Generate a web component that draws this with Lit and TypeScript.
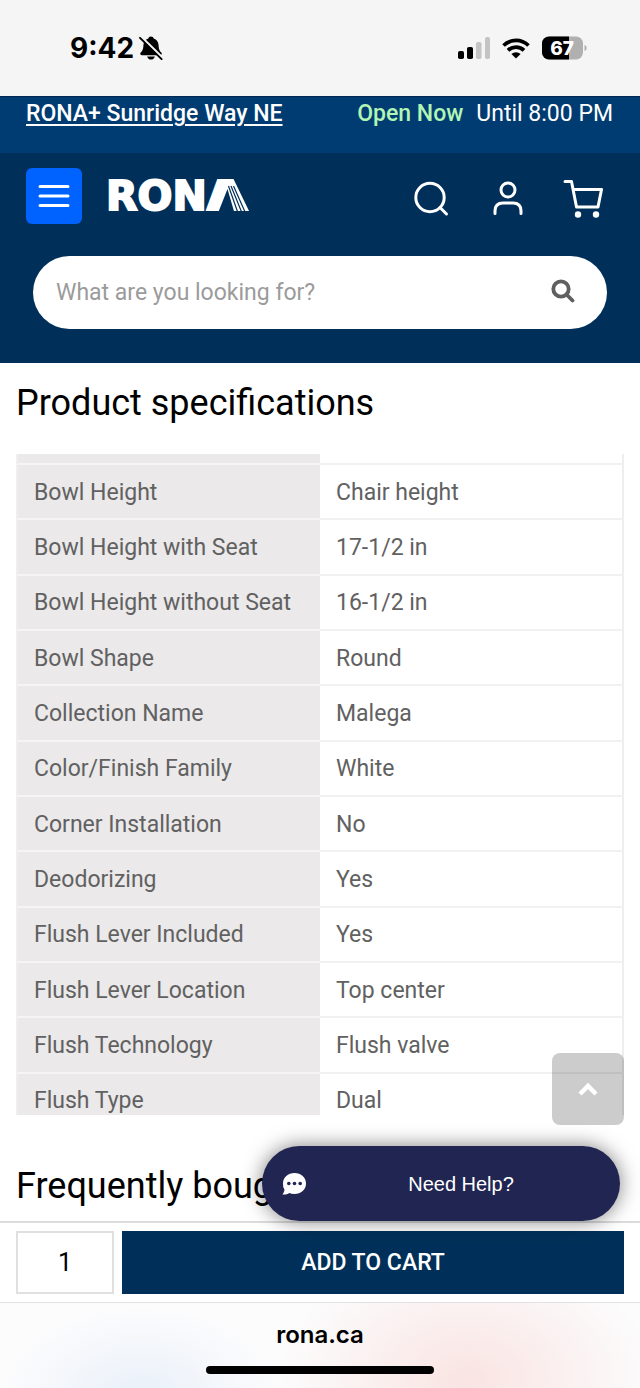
import { LitElement, html, css } from "lit";
import { customElement, state } from "lit/decorators.js";

const SPECS: [string, string][] = [
  ["Bowl Height", "Chair height"],
  ["Bowl Height with Seat", "17-1/2 in"],
  ["Bowl Height without Seat", "16-1/2 in"],
  ["Bowl Shape", "Round"],
  ["Collection Name", "Malega"],
  ["Color/Finish Family", "White"],
  ["Corner Installation", "No"],
  ["Deodorizing", "Yes"],
  ["Flush Lever Included", "Yes"],
  ["Flush Lever Location", "Top center"],
  ["Flush Technology", "Flush valve"],
  ["Flush Type", "Dual"],
];

@customElement("status-bar")
class StatusBar extends LitElement {
  static styles = css`
    :host {
      display: flex;
      justify-content: space-between;
      align-items: center;
      height: 96px;
      padding: 0 53px 0 70px;
      box-sizing: border-box;
      background: #f5f5f5;
      color: #000;
      font-family: Inter, sans-serif;
    }
    .side {
      display: flex;
      align-items: center;
    }
    .left {
      gap: 5px;
    }
    .right {
      gap: 12px;
    }
    .time {
      font-size: 28px;
      line-height: 32px;
      font-weight: 700;
    }
    svg {
      display: block;
    }
    .level {
      font: 800 19px Inter, sans-serif;
      fill: #fff;
    }
  `;

  render() {
    return html`
      <div class="side left">
        <span class="time">9:42</span>
        <svg width="24" height="24" viewBox="0 0 24 24" aria-hidden="true">
          <path d="M12 .5c1.500 0 2.400.8 2.700 1.900 3 1 4.700 3.600 4.900 7 .2 4.200 1.200 5.600 2.700 7.200.9 1 .5 2.600-1 2.600H2.700c-1.500 0-1.900-1.600-1-2.600 1.500-1.600 2.500-3 2.700-7.200.2-3.400 1.900-6 4.900-7C9.600 1.300 10.500.5 12 .5z" />
          <path d="M8.200 20.500h7.600c-.4 1.900-1.900 3.100-3.800 3.100s-3.400-1.200-3.800-3.100z" />
          <path d="M2.200.8 24 22.200" stroke="#f5f5f5" stroke-width="2.400" />
          <path d="M1 1.800 22.600 23.200" stroke="#000" stroke-width="1.900" stroke-linecap="round" />
        </svg>
      </div>
      <div class="side right">
        <svg width="32" height="22" viewBox="0 0 32 22" aria-hidden="true">
          <rect x="0" y="14" width="6" height="8" rx="1.800" />
          <rect x="9" y="10" width="6" height="12" rx="1.800" />
          <rect x="18" y="5" width="5.500" height="17" rx="1.800" fill="#c4c4c4" />
          <rect x="27" y="0" width="5" height="22" rx="1.800" fill="#c4c4c4" />
        </svg>
        <svg width="28" height="21" viewBox="0 0 28 21" aria-hidden="true">
          <g fill="none" stroke="#000" stroke-width="3.700">
            <path d="M1.500 7.500a18 18 0 0 1 25 0" />
            <path d="M6 12.300a11.500 11.500 0 0 1 16 0" />
          </g>
          <path d="M14 20.500 9.400 16a6.600 6.600 0 0 1 9.200 0z" />
        </svg>
        <svg width="45" height="24" viewBox="0 0 45 24" role="img" aria-label="Battery 67">
          <defs><clipPath id="b"><rect width="41" height="23" y=".5" rx="7" /></clipPath></defs>
          <g clip-path="url(#b)">
            <rect width="45" height="24" fill="#b0b0b0" />
            <rect width="27" height="24" />
          </g>
          <path d="M42.500 9v6c1.500-.5 2.200-1.600 2.200-3s-.7-2.500-2.200-3z" fill="#b0b0b0" />
          <text class="level" x="20" y="19" text-anchor="middle">67</text>
        </svg>
      </div>
    `;
  }
}

@customElement("site-header")
class SiteHeader extends LitElement {
  static styles = css`
    :host {
      display: block;
      color: #fff;
      font-family: Roboto, sans-serif;
    }
    .store {
      display: flex;
      justify-content: space-between;
      height: 57px;
      padding: 1px 27px 0 26px;
      background: #003b71;
      border-top: 1px solid #002850;
      box-sizing: border-box;
      font-size: 23px;
      line-height: 32px;
    }
    a {
      color: #fff;
      font-weight: 500;
      text-decoration-thickness: 2px;
      text-underline-offset: 3px;
    }
    .hours {
      display: flex;
      gap: 13px;
    }
    .open {
      color: #b2f5b4;
      font-weight: 500;
    }
    .nav {
      background: #003059;
      padding: 15px 33px 34px;
    }
    .row {
      display: flex;
      align-items: center;
      height: 56px;
      margin: 0 -7px 32px;
    }
    button {
      display: flex;
      align-items: center;
      justify-content: center;
      padding: 0;
      border: 0;
      background: none;
      color: inherit;
    }
    svg {
      display: block;
    }
    .menu {
      width: 56px;
      height: 56px;
      border-radius: 6px;
      background: #0062ff;
    }
    .logo {
      margin-left: 24px;
    }
    .word {
      font: 700 41px "DejaVu Sans", sans-serif;
      fill: #fff;
      stroke: #fff;
      stroke-width: 2px;
    }
    .tools {
      display: flex;
      align-items: center;
      gap: 33px;
      margin: 6px 11px 0 auto;
    }
    .search {
      display: flex;
      align-items: center;
      height: 73px;
      padding: 0 32px 0 23px;
      border-radius: 37px;
      background: #fff;
      color: #5f5f5f;
      box-sizing: border-box;
    }
    input {
      flex: 1;
      min-width: 0;
      padding: 0;
      border: 0;
      outline: 0;
      background: none;
      color: #333;
      font: 23px/32px Roboto, sans-serif;
    }
    input::placeholder {
      color: #9b9b9b;
      opacity: 1;
    }
  `;

  render() {
    return html`
      <div class="store">
        <a href="#store">RONA+ Sunridge Way NE</a>
        <div class="hours"><span class="open">Open Now</span><span>Until 8:00 PM</span></div>
      </div>
      <div class="nav">
        <div class="row">
          <button class="menu" aria-label="Menu">
            <svg width="32" height="24" viewBox="0 0 32 24" stroke="#fff" stroke-width="3" stroke-linecap="round">
              <path d="M2 2.500h28M2 12h28M2 21.500h28" />
            </svg>
          </button>
          <svg class="logo" width="148" height="52" viewBox="0 -11 148 52" role="img" aria-label="RONA">
            <text class="word" x="0" y="29">RONA</text>
            <path d="M101 30 114 -2h13.500L143 30z" fill="#fff" />
            <path d="M112 32 121.500 8l7 24z" fill="#003059" />
            <path d="m122.500 5 9.500 27M125 5l11 27M127.500 5l12 27" stroke="#003059" stroke-width="1.200" />
          </svg>
          <div class="tools">
            <button aria-label="Search">
              <svg width="36" height="36" viewBox="0 0 36 36" fill="none" stroke="#fff" stroke-width="3" stroke-linecap="round">
                <circle cx="17" cy="16.500" r="14.200" /><path d="m27 26.500 6.500 6.500" />
              </svg>
            </button>
            <button aria-label="Account">
              <svg width="48" height="36" viewBox="-4 0 48 36" fill="none" stroke="#fff" stroke-width="3" stroke-linecap="round">
                <circle cx="22" cy="9" r="7" /><path d="M9 32.500V30q0-8 8-8h10q8 0 8 8v2.500" />
              </svg>
            </button>
            <button aria-label="Cart">
              <svg width="40" height="40" viewBox="0 0 40 40" fill="none" stroke="#fff" stroke-width="3" stroke-linecap="round" stroke-linejoin="round">
                <path d="M2 2.500h6.500L13.500 28h21.500L38.500 10.500H10" />
                <circle cx="15" cy="35.500" r="3.200" fill="#fff" stroke="none" /><circle cx="33" cy="35.500" r="3.200" fill="#fff" stroke="none" />
              </svg>
            </button>
          </div>
        </div>
        <form class="search" @submit=${(e: Event) => e.preventDefault()}>
          <input aria-label="Search products" placeholder="What are you looking for?" />
          <button aria-label="Submit search">
            <svg width="24" height="28" viewBox="0 0 24 28" fill="none" stroke="currentColor" stroke-width="3.800" stroke-linecap="round">
              <circle cx="10" cy="10" r="7.700" /><path d="m16 16 5.500 5.500" />
            </svg>
          </button>
        </form>
      </div>
    `;
  }
}

@customElement("spec-table")
class SpecTable extends LitElement {
  static styles = css`
    :host {
      display: block;
      height: 661px;
      overflow: hidden;
    }
    table {
      width: 100%;
      height: 675px;
      table-layout: fixed;
      border-collapse: separate;
      border-spacing: 0;
      color: #616161;
      font: 23px/32px Roboto, sans-serif;
    }
    th,
    td {
      padding: 2px 16px 0;
      border-bottom: 2px solid #f2f1f2;
      text-align: left;
      font-weight: 400;
    }
    th {
      background: #ebe9ea;
      border-left: 2px solid #f0eff0;
      border-bottom-color: #f6f5f6;
    }
    td {
      border-right: 2px solid #efeeef;
    }
    .rest {
      height: 11px;
    }
  `;

  render() {
    return html`
      <table>
        <tbody>
          <tr class="rest"><th></th><td></td></tr>
          ${SPECS.map(([k, v]) => html`<tr><th scope="row">${k}</th><td>${v}</td></tr>`)}
        </tbody>
      </table>
    `;
  }
}

@customElement("app-root")
class AppRoot extends LitElement {
  @state() private qty = "1";

  static styles = css`
    :host {
      display: flex;
      flex-direction: column;
      min-height: 100vh;
      background: #fff;
      color: #000;
      font-family: Roboto, sans-serif;
    }
    main {
      position: relative;
      flex: 1;
      padding: 20px 16px 0;
    }
    h2 {
      margin: 0;
      font-size: 36px;
      line-height: 40px;
      font-weight: 400;
    }
    .specs {
      margin: 31px 0 51px;
    }
    button {
      padding: 0;
      border: 0;
      color: #fff;
    }
    .top {
      position: absolute;
      right: 16px;
      bottom: 96px;
      display: grid;
      place-items: center;
      width: 72px;
      height: 72px;
      border-radius: 8px;
      background: rgba(0, 0, 0, 0.2);
    }
    .help {
      position: absolute;
      right: 20px;
      bottom: 0;
      display: flex;
      align-items: center;
      width: 358px;
      height: 75px;
      padding: 0 4px 0 20px;
      border-radius: 38px;
      background: #212552;
      box-shadow: 0 0 20px rgba(0, 0, 0, 0.5);
      box-sizing: border-box;
      font: 20px/24px "Liberation Sans", sans-serif;
    }
    .label {
      flex: 1;
      text-align: center;
    }
    .buy {
      display: flex;
      gap: 8px;
      height: 82px;
      padding: 8px 16px;
      border-top: 2px solid #dcdcdc;
      border-bottom: 1px solid #e2e2e2;
      box-sizing: border-box;
    }
    .qty {
      width: 98px;
      padding: 0;
      border: 2px solid #e0e0e0;
      border-radius: 0;
      background: #fff;
      color: #000;
      text-align: center;
      font: 25px/32px Roboto, sans-serif;
      box-sizing: border-box;
    }
    .add {
      flex: 1;
      background: #003059;
      font: 500 23px/32px Roboto, sans-serif;
    }
    footer {
      display: flex;
      flex-direction: column;
      align-items: center;
      gap: 15px;
      height: 85px;
      padding-top: 16px;
      box-sizing: border-box;
      background:
        radial-gradient(ellipse 190px 130px at 73% 90%, #f9e4e2, rgba(249, 228, 226, 0)),
        radial-gradient(ellipse 140px 90px at 22% 110%, #e9f0f9, rgba(233, 240, 249, 0)),
        #fcfcfd;
      font: 600 24px/32px Inter, sans-serif;
    }
    .home {
      width: 228px;
      height: 8px;
      border-radius: 4px;
      background: #000;
    }
  `;

  render() {
    return html`
      <status-bar></status-bar>
      <site-header></site-header>
      <main>
        <h2>Product specifications</h2>
        <spec-table class="specs"></spec-table>
        <h2>Frequently bought</h2>
        <button class="top" aria-label="Back to top">
          <svg width="20" height="14" viewBox="0 0 20 14" fill="none" stroke="#fff" stroke-width="4.500">
            <path d="m2 12 8-8 8 8" />
          </svg>
        </button>
        <button class="help">
          <svg width="24" height="24" viewBox="0 0 24 24" aria-hidden="true">
            <path d="M12.500 1C19 1 24 5.600 24 11.500S19 22 12.500 22c-2 0-3.700-.4-5.200-1.100C5.500 22.100 3 22.800.3 22.500c1.200-1.300 2-3 2.200-4.800A10 10 0 0 1 1 11.500C1 5.600 6 1 12.500 1z" fill="#fff" />
            <g fill="#212552"><circle cx="6.800" cy="11.500" r="1.800" /><circle cx="12.500" cy="11.500" r="1.800" /><circle cx="18.200" cy="11.500" r="1.800" /></g>
          </svg>
          <span class="label">Need Help?</span>
        </button>
      </main>
      <div class="buy">
        <input class="qty" aria-label="Quantity" inputmode="numeric" .value=${this.qty}
          @input=${(e: Event) => (this.qty = (e.target as HTMLInputElement).value)} />
        <button class="add">ADD TO CART</button>
      </div>
      <footer>
        <span>rona.ca</span>
        <div class="home"></div>
      </footer>
    `;
  }
}
